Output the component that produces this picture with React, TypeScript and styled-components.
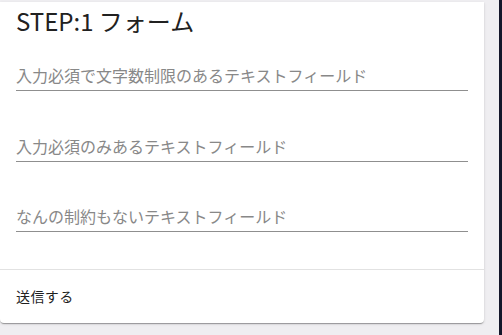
import React from "react";
import styled, { createGlobalStyle } from "styled-components";

const GlobalStyle = createGlobalStyle`
  html, body {
    margin: 0;
    padding: 0;
    background: #efeef1;
    font-family: "Noto Sans CJK JP", "Noto Sans", sans-serif;
  }
`;

const fields = [
  "入力必須で文字数制限のあるテキストフィールド",
  "入力必須のみあるテキストフィールド",
  "なんの制約もないテキストフィールド",
];

const App: React.FC = () => {
  return (
    <Page>
      <GlobalStyle />
      <Main>
        <Card>
          <Title>STEP:1 フォーム</Title>
          <Form>
            {fields.map((label) => (
              <Field key={label} placeholder={label} />
            ))}
          </Form>
          <Divider />
          <Actions>
            <SubmitButton>送信する</SubmitButton>
          </Actions>
        </Card>
      </Main>
      <Strip />
    </Page>
  );
};

export default App;

const Page = styled.div`
  display: flex;
  flex-direction: row;
  width: 100%;
  height: 335px;
  overflow: hidden;
`;

const Main = styled.div`
  width: 499px;
  flex-shrink: 0;
  box-sizing: border-box;
  padding: 2px 15px 0 0;
  background: #efeef1;
`;

const Strip = styled.div`
  flex: 1;
  background: #13162a;
`;

const Card = styled.div`
  display: flex;
  flex-direction: column;
  background: #ffffff;
  border-radius: 0 0 4px 4px;
  box-shadow: 0 2px 1px -1px rgba(0, 0, 0, 0.2), 0 1px 1px 0 rgba(0, 0, 0, 0.14),
    0 1px 3px 0 rgba(0, 0, 0, 0.12);
  padding-top: 3px;
`;

const Title = styled.h2`
  margin: 0;
  padding: 0 16px;
  font-size: 24px;
  font-weight: 400;
  line-height: 32px;
  color: #212121;
`;

const Form = styled.div`
  display: flex;
  flex-direction: column;
  gap: 38.5px;
  padding: 22px 16px 37px 16px;
`;

const Field = styled.input`
  display: block;
  width: 100%;
  box-sizing: border-box;
  border: none;
  border-bottom: 1px solid #8f8f8f;
  outline: none;
  padding: 4px 0 3px 0;
  height: 32px;
  font-family: inherit;
  font-size: 16px;
  line-height: 24px;
  color: #212121;
  background: transparent;

  &::placeholder {
    color: #888888;
    opacity: 1;
  }
`;

const Divider = styled.hr`
  margin: 0;
  border: none;
  border-top: 1px solid #e2e2e2;
`;

const Actions = styled.div`
  display: flex;
  align-items: center;
  padding: 8px;
`;

const SubmitButton = styled.button`
  border: none;
  background: transparent;
  padding: 6px 8px;
  font-family: inherit;
  font-size: 14px;
  font-weight: 400;
  letter-spacing: 0.4px;
  line-height: 24.5px;
  color: #1f1f1f;
  cursor: pointer;
`;
